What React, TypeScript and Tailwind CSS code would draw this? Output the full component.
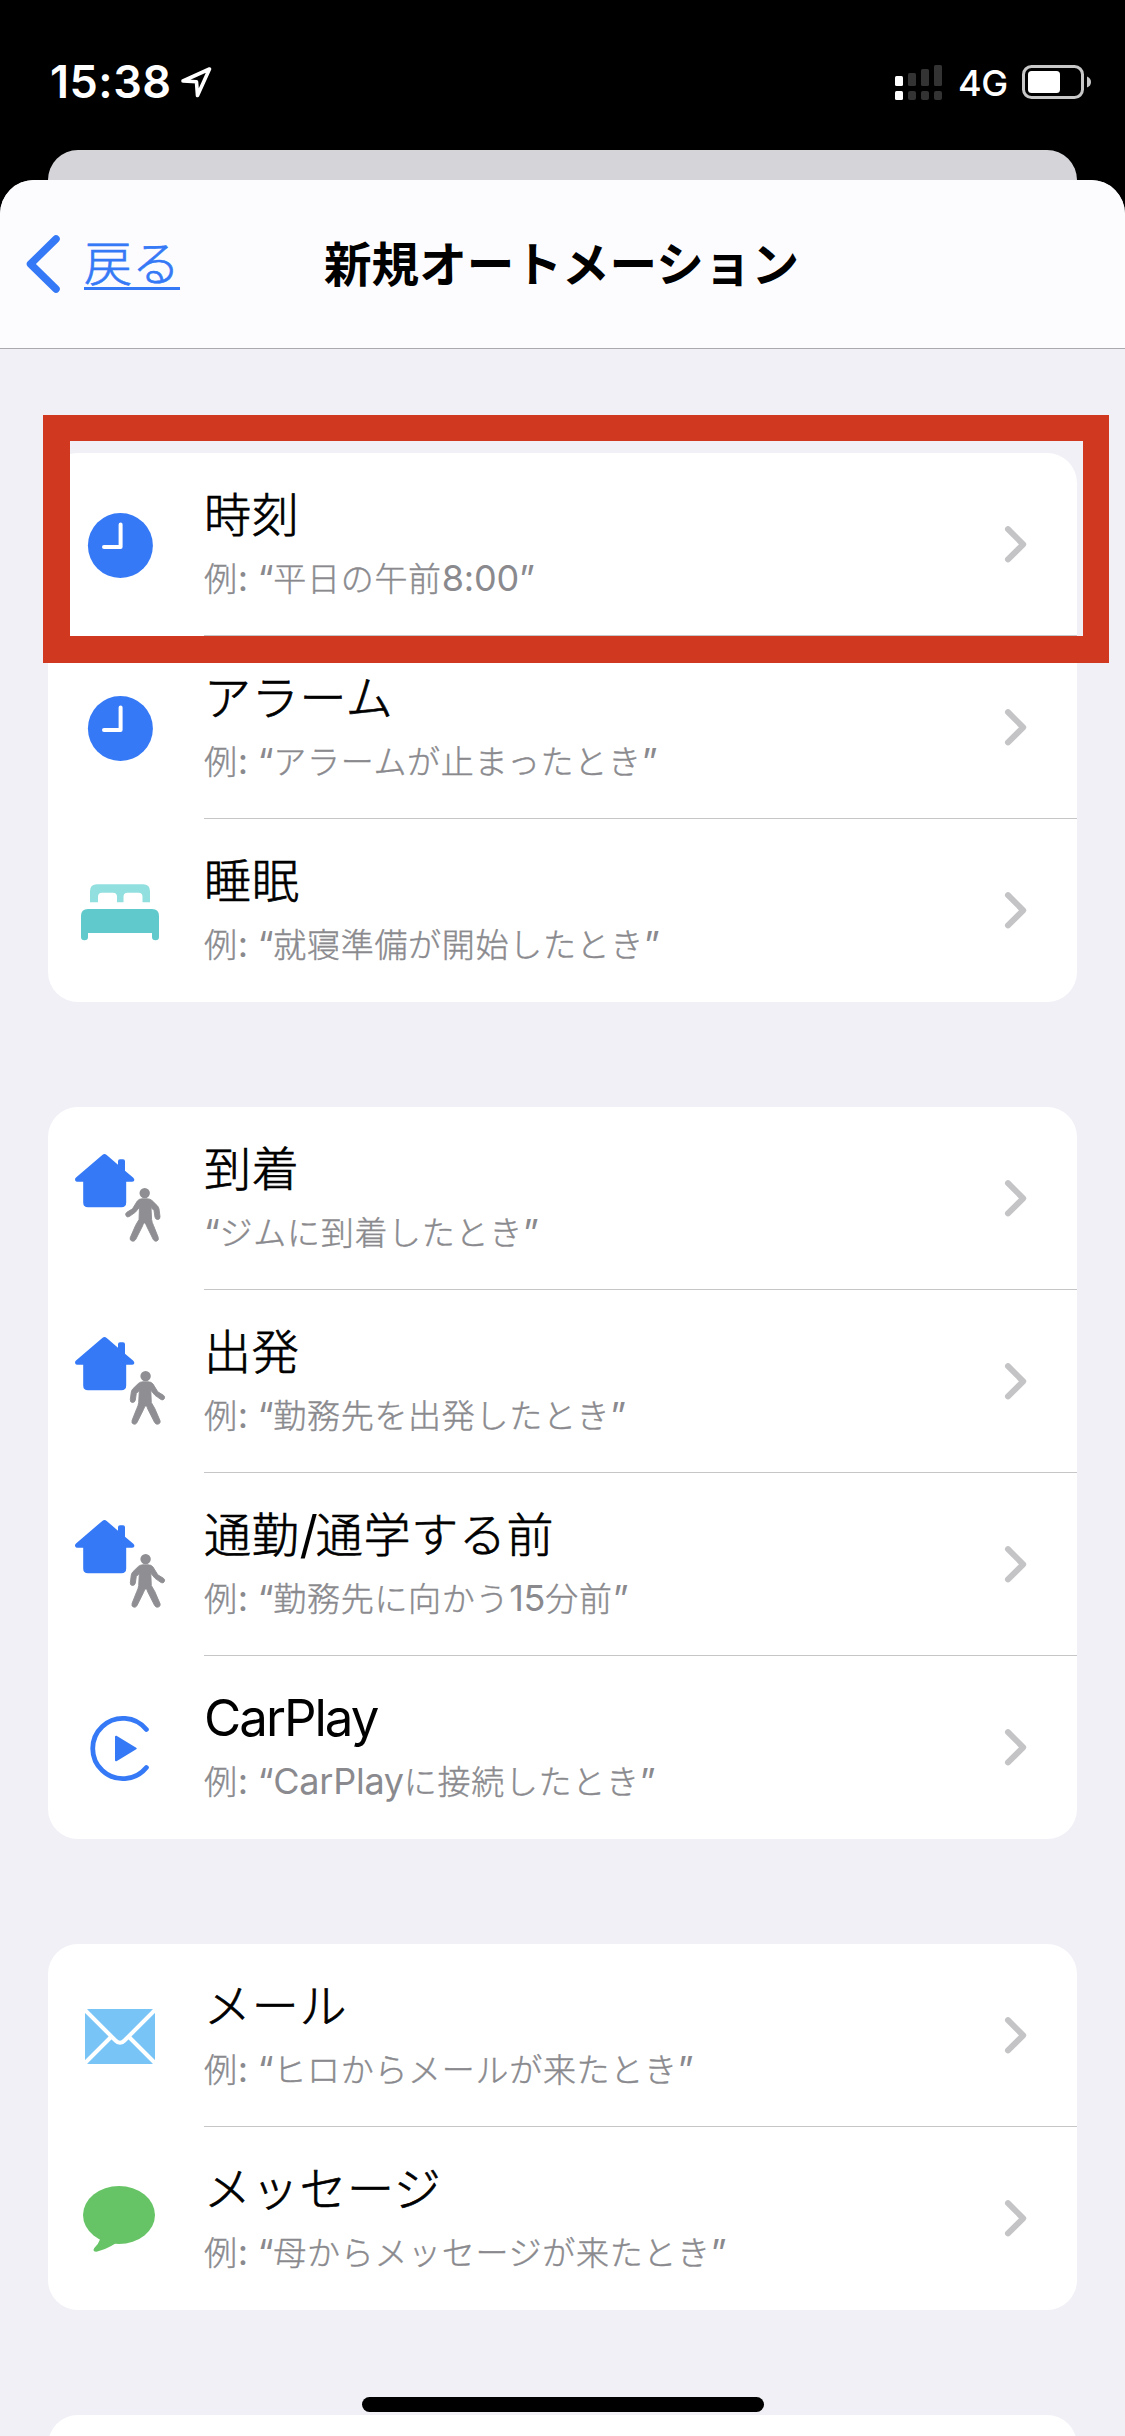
import type { ReactNode } from "react";

const BLUE = "#3579f6";

/** Splits a string so Latin runs and Japanese runs can carry their own size. */
function Mixed({ text, cjk, latin = "" }: { text: string; cjk: string; latin?: string }) {
  const runs = text.match(/[\x20-\x7e“”]+|[^\x20-\x7e“”]+/g) ?? [];
  return (
    <>
      {runs.map((run, i) => (
        <span key={i} className={/^[\x20-\x7e“”]/.test(run) ? latin : cjk}>
          {run}
        </span>
      ))}
    </>
  );
}

function IconBox({ children }: { children: ReactNode }) {
  return (
    <svg className="h-[183px] w-[156px] shrink-0" viewBox="0 0 156 183" fill="none">
      {children}
    </svg>
  );
}

function ClockIcon() {
  return (
    <IconBox>
      <circle cx="72.4" cy="92.5" r="32.5" fill={BLUE} />
      <path d="M72.6 71.5V94H56" stroke="#fff" strokeWidth="4" strokeLinecap="round" strokeLinejoin="round" />
    </IconBox>
  );
}

function BedIcon() {
  return (
    <IconBox>
      <path
        d="M42 84V73Q42 66 49 66H95Q102 66 102 73V84H94.500V78.500Q94.500 74.500 90.500 74.500H79.500Q75.500 74.500 75.500 78.500V84H69V78.500Q69 74.500 65 74.500H54Q50 74.500 50 78.500V84Z"
        fill="#92dfdf"
        transform="translate(0 -0.700)"
      />
      <path
        d="M33 118V97Q33 90 40 90H104Q111 90 111 97V118Q111 121.200 107.500 121.200Q104 121.200 104 118V114H40V118Q40 121.200 36.500 121.200Q33 121.200 33 118Z"
        fill="#5fc9cc"
      />
    </IconBox>
  );
}

function HomeWalkIcon({ leaving = false }: { leaving?: boolean }) {
  return (
    <IconBox>
      <path
        d="M54.300 47.900Q56.500 46.200 58.700 47.900L70 57.800V54.300Q70 52.300 72 52.300H75Q77 52.300 77 54.300V63.800L85.300 70.700Q86.800 72.200 86.200 73.500Q85.600 74.800 84 74.800H78.200V95.500Q78.200 100.300 73.400 100.300H40Q35.200 100.300 35.200 95.500V74.800H29.500Q27.700 74.800 27.100 73.300Q26.600 71.700 28 70.500Z"
        fill={BLUE}
      />
      <g transform={leaving ? "translate(194.300 0) scale(-1 1)" : undefined} fill="#8e8e93">
        <circle cx="96.700" cy="86.100" r="5.200" />
        <path
          d="M94 91.800H99.500Q102 91.800 104 93.500L109.400 98.800Q110.700 100.200 111 102L112 109.500Q112.200 112.300 110 112.500Q107.600 112.700 107 110.200L106 103.500L103 100.500L103.600 112.500Q104 115.500 105.500 118.500L110.200 130.300Q111 133 109 134Q106.800 134.900 105.400 132.800L98.800 119.500L97.300 116H95.600L94.500 119L87.700 132.500Q86.400 134.800 84 134.100Q81.600 133.300 82.200 130.800L87.500 118.500L91 112.500L91.500 100.300L87.300 105.300L81.200 109.600Q79 110.600 77.900 108.600Q77 106.700 78.800 105.300L84.500 101.800L89.300 94Q91.200 91.800 94 91.800Z"
          stroke="#8e8e93"
          strokeWidth="0.900"
        />
      </g>
    </IconBox>
  );
}

function CarPlayIcon() {
  return (
    <IconBox>
      <path d="M98.400 73.500A30.200 30.200 0 1 0 98.400 111.500" stroke={BLUE} strokeWidth="4.800" strokeLinecap="round" />
      <path d="M68 80.700V104.300L87.700 92.500Z" fill={BLUE} stroke={BLUE} strokeWidth="2" strokeLinejoin="round" />
    </IconBox>
  );
}

function MailIcon() {
  return (
    <IconBox>
      <rect x="37" y="65" width="70" height="55" rx="4" fill="#78c4f6" />
      <path
        d="M36.500 65.500L67.500 96.500Q72 101 76.500 96.500L107.500 65.500M36.500 119.500L62.500 93.500M107.500 119.500L81.500 93.500"
        stroke="#fff"
        strokeWidth="4"
      />
    </IconBox>
  );
}

function MessageIcon() {
  return (
    <IconBox>
      <ellipse cx="71" cy="88" rx="36" ry="29" fill="#67c466" />
      <path
        d="M50 110L52 112.500Q50.500 117 46.300 121Q44 124.700 48.500 124.700Q58 122.500 67 116.800L72 110Z"
        fill="#67c466"
      />
    </IconBox>
  );
}

type Item = { icon: ReactNode; title: string; example: string };

const groups: Item[][] = [
  [
    { icon: <ClockIcon />, title: "時刻", example: "例: “平日の午前8:00”" },
    { icon: <ClockIcon />, title: "アラーム", example: "例: “アラームが止まったとき”" },
    { icon: <BedIcon />, title: "睡眠", example: "例: “就寝準備が開始したとき”" },
  ],
  [
    { icon: <HomeWalkIcon />, title: "到着", example: "“ジムに到着したとき”" },
    { icon: <HomeWalkIcon leaving />, title: "出発", example: "例: “勤務先を出発したとき”" },
    { icon: <HomeWalkIcon leaving />, title: "通勤/通学する前", example: "例: “勤務先に向かう15分前”" },
    { icon: <CarPlayIcon />, title: "CarPlay", example: "例: “CarPlayに接続したとき”" },
  ],
  [
    { icon: <MailIcon />, title: "メール", example: "例: “ヒロからメールが来たとき”" },
    { icon: <MessageIcon />, title: "メッセージ", example: "例: “母からメッセージが来たとき”" },
  ],
];

function Row({ item, last }: { item: Item; last: boolean }) {
  return (
    <li className="flex h-[183px]">
      {item.icon}
      <div className={`flex flex-1 justify-between ${last ? "" : "border-b border-[#c6c6c8]"}`}>
        <div className="pt-[32px] whitespace-nowrap">
          <div className="h-[60px] text-[51px] leading-[60px] text-black">
            <Mixed
              text={item.title}
              cjk="align-[1px] text-[47px] leading-[0] font-light tracking-[0.7px] [-webkit-text-stroke:0.7px_currentColor]"
              latin="tracking-[-2px]"
            />
          </div>
          <div className="mt-[10px] h-[46px] text-[36px] leading-[46px] text-[#8a8a8e]">
            <Mixed
              text={item.example}
              cjk="text-[33px] leading-[0] font-light tracking-[0.7px] [-webkit-text-stroke:0.4px_currentColor]"
              latin="tracking-[-0.25px]"
            />
          </div>
        </div>
        <svg className="mt-[70px] mr-[44px] h-[42px] w-[30px]" viewBox="0 0 30 42" fill="none">
          <path d="M5 6.200L20.200 21.300L5 36.400" stroke="#c4c4c6" strokeWidth="6" strokeLinecap="round" strokeLinejoin="round" />
        </svg>
      </div>
    </li>
  );
}

function StatusBar() {
  return (
    <div className="flex h-[150px] items-start justify-between pr-[33px] pl-[50px] text-white">
      <div className="flex pt-[55px]">
        <span className="w-[123px] text-[45px] leading-[54px] font-semibold tracking-[0.5px] whitespace-nowrap">15:38</span>
        <svg className="mt-[11px] ml-[7px] h-[34px] w-[34px]" viewBox="0 0 34 34" fill="none">
          <path d="M3 15L29.500 3L17.500 29.500L16.500 15.800Z" stroke="#fff" strokeWidth="3.600" strokeLinejoin="round" />
        </svg>
      </div>
      <div className="flex pt-[65px]">
        <svg className="h-[36px] w-[48px]" viewBox="0 0 48 36">
          <g fill="#fff">
            <rect x="0" y="11" width="8" height="10" rx="1.500" />
            <rect x="0" y="26" width="8" height="9" rx="1.500" />
          </g>
          <g fill="#333">
            <rect x="13" y="8" width="8" height="13" rx="1.500" />
            <rect x="26" y="4" width="8" height="17" rx="1.500" />
            <rect x="39" y="0" width="8" height="21" rx="1.500" />
            <rect x="13" y="26" width="8" height="9" rx="2" />
            <rect x="26" y="26" width="8" height="9" rx="2" />
            <rect x="39" y="26" width="8" height="9" rx="2" />
          </g>
        </svg>
        <span className="ml-[15px] w-[64px] text-[36px] leading-[36px] font-medium tracking-[-0.5px]">4G</span>
        <svg className="h-[36px] w-[70px]" viewBox="0 0 70 36" fill="none">
          <rect x="1.500" y="1.500" width="59" height="31" rx="8" stroke="#c8c8c8" strokeWidth="3" />
          <rect x="6" y="6" width="32" height="22" rx="3.500" fill="#fff" />
          <path d="M65 11.500Q69 13 69 17T65 22.500Z" fill="#c8c8c8" />
        </svg>
      </div>
    </div>
  );
}

export default function App() {
  return (
    <div className="relative flex h-[2436px] w-[1125px] flex-col overflow-hidden bg-black font-['Inter','Noto_Sans_CJK_JP',sans-serif]">
      <StatusBar />
      <div className="mx-[48px] h-[30px] shrink-0 rounded-t-[30px] bg-[#d5d4d9]" />
      <main className="flex flex-1 flex-col overflow-hidden rounded-t-[34px] bg-[#f1f0f6]">
        <header className="grid h-[169px] shrink-0 grid-cols-[324px_477px_324px] border-b border-[#aaaaae] bg-[#fcfcfe]">
          <button className="flex items-start pl-[24px] text-[#3579f6]">
            <svg className="mt-[54px] h-[60px] w-[40px]" viewBox="0 0 40 60" fill="none">
              <path d="M32 5L6.500 30L32 55" stroke={BLUE} strokeWidth="7.500" strokeLinecap="round" strokeLinejoin="round" />
            </svg>
            <span className="mt-[50px] ml-[20px] text-[48px] leading-[68px] font-light underline decoration-[3px] underline-offset-[6px] [-webkit-text-stroke:0.7px_currentColor] [text-decoration-skip-ink:none]">
              戻る
            </span>
          </button>
          <h1 className="mt-[51px] text-[47.600px] leading-[68px] font-bold whitespace-nowrap text-black">
            新規オートメーション
          </h1>
        </header>
        <div className="flex flex-col gap-[105px] px-[48px] pt-[104px]">
          {groups.map((group, g) => (
            <ul key={g} className="rounded-[30px] bg-white">
              {group.map((item, i) => (
                <Row key={item.title} item={item} last={i === group.length - 1} />
              ))}
            </ul>
          ))}
          <div className="h-[183px] rounded-[30px] bg-white" />
        </div>
      </main>
      <div className="absolute top-[415px] left-[43px] h-[248px] w-[1066px] border-[26px] border-b-[27px] border-l-[27px] border-[#d03920]" />
      <div className="absolute top-[2397px] left-[362px] h-[15px] w-[402px] rounded-full bg-black" />
    </div>
  );
}
